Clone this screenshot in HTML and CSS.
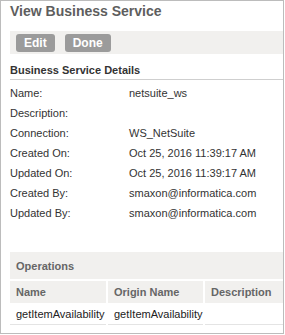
FILE: index.html
```html
<!DOCTYPE html>
<html lang="en">

<head>
    <meta charset="UTF-8">
    <meta name="viewport" content="width=device-width, initial-scale=1.0">
    <title>View Business Service</title>
    <link rel="stylesheet" href="styles.css">
</head>

<body>
    <div class="view-panel">
        <h1 class="page-title">View Business Service</h1>

        <div class="toolbar">
            <button class="tool-button">Edit</button>
            <button class="tool-button">Done</button>
        </div>

        <h2 class="section-title">Business Service Details</h2>

        <div class="details">
            <div class="detail-row">
                <span class="detail-label">Name:</span>
                <span class="detail-value">netsuite_ws</span>
            </div>
            <div class="detail-row">
                <span class="detail-label">Description:</span>
                <span class="detail-value"></span>
            </div>
            <div class="detail-row">
                <span class="detail-label">Connection:</span>
                <span class="detail-value">WS_NetSuite</span>
            </div>
            <div class="detail-row">
                <span class="detail-label">Created On:</span>
                <span class="detail-value">Oct 25, 2016 11:39:17 AM</span>
            </div>
            <div class="detail-row">
                <span class="detail-label">Updated On:</span>
                <span class="detail-value">Oct 25, 2016 11:39:17 AM</span>
            </div>
            <div class="detail-row">
                <span class="detail-label">Created By:</span>
                <span class="detail-value">smaxon@informatica.com</span>
            </div>
            <div class="detail-row">
                <span class="detail-label">Updated By:</span>
                <span class="detail-value">smaxon@informatica.com</span>
            </div>
        </div>

        <div class="operations">
            <div class="operations-title">Operations</div>
            <table class="operations-table">
                <thead>
                    <tr>
                        <th class="col-name">Name</th>
                        <th class="col-origin">Origin Name</th>
                        <th class="col-desc">Description</th>
                    </tr>
                </thead>
                <tbody>
                    <tr>
                        <td>getItemAvailability</td>
                        <td>getItemAvailability</td>
                        <td></td>
                    </tr>
                </tbody>
            </table>
        </div>
    </div>
</body>

</html>
```

FILE: styles.css
```css
body {
    margin: 0;
    font-family: "Liberation Sans", Arial, sans-serif;
    background: #ffffff;
}

.view-panel {
    box-sizing: border-box;
    width: 284px;
    height: 334px;
    border: 1px solid #bcbcbc;
    padding-left: 9px;
}

.page-title {
    margin: 0 0 12px;
    padding-top: 2px;
    font-size: 14px;
    line-height: 16px;
    font-weight: bold;
    color: #5e5e5e;
}

.toolbar {
    display: flex;
    gap: 10px;
    padding: 3px 0 2px 6px;
    background: #f1f0ee;
}

.tool-button {
    height: 18px;
    padding: 0 8px;
    border: none;
    border-radius: 3px;
    background: #9b9b9b;
    color: #ffffff;
    font-family: inherit;
    font-size: 12px;
    font-weight: bold;
    line-height: 18px;
}

.section-title {
    margin: 10px 0 0;
    padding-bottom: 2px;
    font-size: 11px;
    line-height: 13px;
    font-weight: bold;
    color: #333333;
    border-bottom: 1px solid #cfcfcf;
}

.details {
    padding-top: 3px;
}

.detail-row {
    display: flex;
    font-size: 11px;
    line-height: 20px;
    color: #333333;
}

.detail-label {
    width: 119px;
    flex-shrink: 0;
}

.operations {
    margin-top: 29px;
}

.operations-title {
    padding: 8px 6px 6px;
    font-size: 11px;
    line-height: 13px;
    font-weight: bold;
    color: #666666;
    background: #f1f0ee;
    border-bottom: 2px solid #ffffff;
}

.operations-table {
    width: 273px;
    border-collapse: collapse;
    font-size: 11px;
    line-height: 13px;
    table-layout: fixed;
}

.operations-table th {
    padding: 5px 6px 4px;
    text-align: left;
    font-weight: bold;
    color: #666666;
    background: #f1f0ee;
    border-left: 2px solid #ffffff;
}

.operations-table th:first-child {
    border-left: none;
}

.col-name {
    width: 84px;
}

.col-origin {
    width: 83px;
}

.operations-table td {
    padding: 5px 6px 3px;
    color: #222222;
    border-bottom: 1px solid #e4e4e4;
    border-left: 2px solid #ffffff;
}

.operations-table td:first-child {
    border-left: none;
}
```
